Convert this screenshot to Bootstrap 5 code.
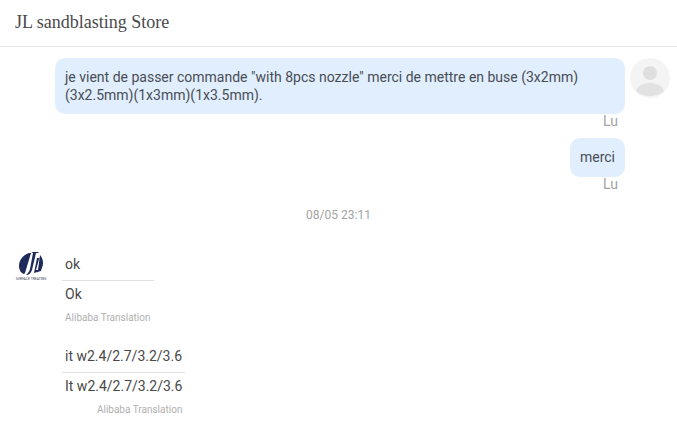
<!DOCTYPE html>
<html lang="fr">
<head>
  <meta charset="UTF-8">
  <title>JL sandblasting Store</title>
  <link href="https://cdn.jsdelivr.net/npm/bootstrap@5.3.2/dist/css/bootstrap.min.css" rel="stylesheet">
  <style>
    html, body {
      height: 100%;
      overflow: hidden;
    }
    body {
      background-color: #fff;
      color: #484848;
      font-family: Roboto, "Liberation Sans", sans-serif;
      font-size: 14px;
      line-height: 18px;
    }
    .store-head {
      height: 47px;
      padding: 12px 15px 0;
      border-bottom: 1px solid #e4e4e4;
      font-family: "Liberation Serif", serif;
      font-size: 18px;
      line-height: 20px;
      color: #4a4a4a;
    }
    .chat-area {
      padding-top: 11px;
    }
    .out-row {
      padding-right: 52px;
    }
    .out-bubble {
      background-color: #e1eefd;
      border-radius: 10px;
      padding: 10px;
      color: #484d55;
    }
    .bubble-wide {
      width: 570px;
      height: 56px;
    }
    .bubble-small {
      height: 39px;
    }
    .read-mark {
      height: 15px;
      margin: 0 7px 9px 0;
      font-size: 14px;
      line-height: 15px;
      color: #a3a3a3;
    }
    .user-pic {
      width: 40px;
      height: 40px;
      right: 7px;
      top: 11px;
    }
    .time-mark {
      margin-top: 5px;
      height: 18px;
      font-size: 12px;
      color: #a3a3a3;
    }
    .in-row {
      padding-left: 15px;
      margin-top: 25px;
    }
    .shop-pic {
      width: 32px;
      height: 32px;
      margin-top: 2px;
      margin-right: 15px;
    }
    .in-msg {
      padding: 0 3px;
      margin-bottom: 16px;
    }
    .msg-orig {
      padding: 6px 3px 7px;
      margin: 0 -3px;
      border-bottom: 1px solid #e2e2e2;
    }
    .msg-trans {
      padding: 4px 0 0;
    }
    .msg-source {
      margin-top: 8px;
      font-size: 10px;
      line-height: 14px;
      color: #b0b0b0;
    }
    .msg-first {
      width: 92px;
    }
  </style>
</head>
<body>

<div class="store-head">JL sandblasting Store</div>

<div class="chat-area position-relative">
  <div class="out-row d-flex flex-column align-items-end">
    <div class="out-bubble bubble-wide">je vient de passer commande "with 8pcs nozzle" merci de mettre en buse (3x2mm) (3x2.5mm)(1x3mm)(1x3.5mm).</div>
    <div class="read-mark">Lu</div>
    <div class="out-bubble bubble-small">merci</div>
    <div class="read-mark">Lu</div>
  </div>

  <svg class="user-pic position-absolute" viewBox="0 0 40 40">
    <circle cx="20" cy="20" r="20" fill="#f4f4f4"/>
    <circle cx="20" cy="15" r="7" fill="#dfdfdf"/>
    <path d="M6 33c2-6 8-8 14-8s12 2 14 8c-3 3-9 5-14 5s-11-2-14-5z" fill="#e2e2e2"/>
  </svg>

  <div class="time-mark text-center">08/05 23:11</div>

  <div class="in-row d-flex">
    <svg class="shop-pic flex-shrink-0" viewBox="0 0 32 32">
      <path d="M14 2C8 4 4 9 4 15c0 4 2 7 5 8l1-1 6-20z" fill="#1f2a5c"/>
      <path d="M18 1h6l-1 1h-2l-4 17c-1 3-3 5-6 5l1-1c1-1 2-2 3-5l3-16h-2z" fill="#1f2a5c"/>
      <path d="M22 7h3l-1 1-3 11h3l3-3-1 4-7 2z" fill="#1f2a5c"/>
      <path d="M25 4c2 2 3 5 3 8 0 3-1 6-4 8l-1-1 2-15z" fill="#1f2a5c"/>
      <text x="16" y="29" font-size="3.4" text-anchor="middle" fill="#445">SURFACE TREATING</text>
    </svg>
    <div>
      <div class="in-msg msg-first">
        <div class="msg-orig">ok</div>
        <div class="msg-trans">Ok</div>
        <div class="msg-source">Alibaba Translation</div>
      </div>
      <div class="in-msg">
        <div class="msg-orig">it w2.4/2.7/3.2/3.6</div>
        <div class="msg-trans">It w2.4/2.7/3.2/3.6</div>
        <div class="msg-source text-end">Alibaba Translation</div>
      </div>
    </div>
  </div>
</div>

<script src="https://cdn.jsdelivr.net/npm/bootstrap@5.3.2/dist/js/bootstrap.bundle.min.js"></script>
</body>
</html>
